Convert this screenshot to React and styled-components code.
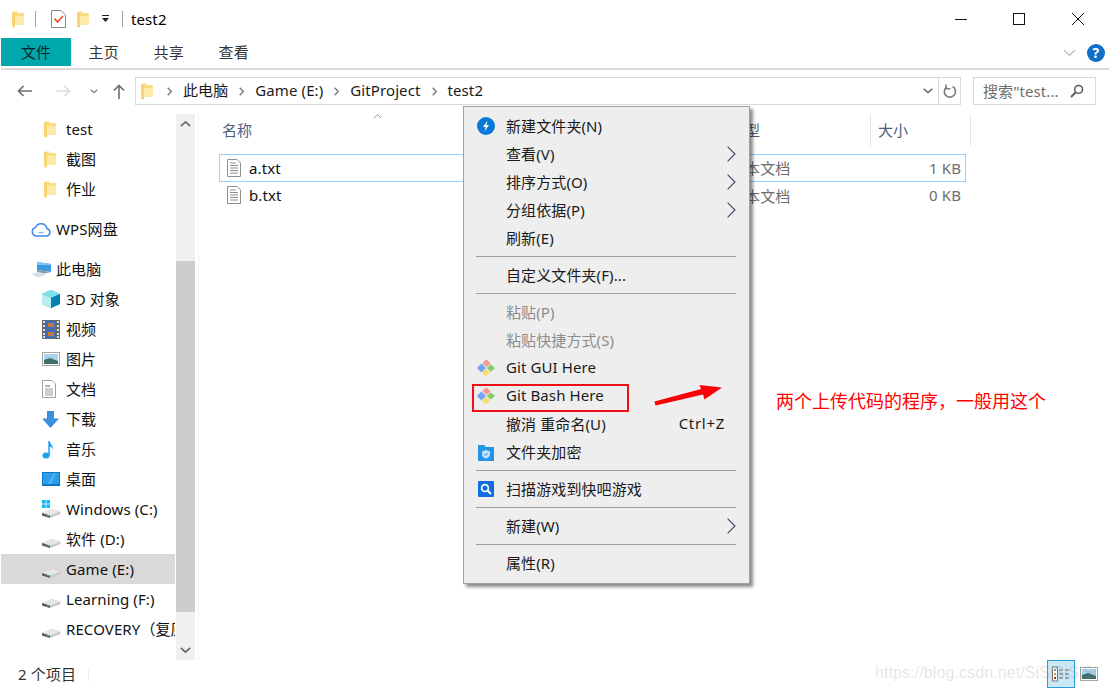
import React from "react";
import styled, { createGlobalStyle } from "styled-components";

const GlobalStyle = createGlobalStyle`
  html, body { margin: 0; padding: 0; background: #fff; }
  body { font-family: "Noto Sans", "Noto Sans CJK SC", sans-serif; font-size: 15px; color: #000; letter-spacing: 0.1px; }
`;

const Page = styled.div`
  position: relative;
  width: 1109px;
  height: 690px;
  overflow: hidden;
  background: #fff;
  display: flex;
  flex-direction: column;
`;

/* title bar */
const TitleBar = styled.div`
  height: 38px;
  display: flex;
  align-items: center;
  padding-left: 12px;
`;
const Slot = styled.span`
  display: flex;
  align-items: center;
  margin-left: ${(p) => p.$gap || 0}px;
`;
const TitleSep = styled.span`
  width: 1px;
  height: 16px;
  background: #a0a0a0;
  margin-left: ${(p) => p.$gap}px;
`;
const TitleText = styled.span`
  margin-left: 8px;
  line-height: 20px;
`;
const WinButtons = styled.div`
  margin-left: auto;
  padding-right: 2px;
  display: flex;
`;
const WinButton = styled.span`
  width: 58.5px;
  height: 38px;
  display: flex;
  align-items: center;
  justify-content: center;
`;

/* ribbon */
const Ribbon = styled.div`
  height: 30px;
  margin-left: 1px;
  border-bottom: 2px solid #dadada;
  display: flex;
  align-items: flex-start;
`;
const Tab = styled.span`
  height: 28px;
  line-height: 29px;
  padding: 0 ${(p) => (p.$active ? "20px 0 20px" : "17.4px 0 17.4px")};
  background: ${(p) => (p.$active ? "#00a8ad" : "transparent")};
  color: ${(p) => (p.$active ? "#06262a" : "#333")};
`;
const RibbonRight = styled.div`
  margin-left: auto;
  height: 28px;
  padding-right: 4px;
  display: flex;
  align-items: center;
  gap: 11px;
  transform: translateY(1px);
`;
const Help = styled.span`
  width: 18px;
  height: 18px;
  border-radius: 50%;
  background: #0e6ec8;
  color: #fff;
  font-size: 14px;
  font-weight: 700;
  line-height: 18px;
  text-align: center;
`;

/* address row */
const Toolbar = styled.div`
  height: 28px;
  margin-top: 7px;
  margin-bottom: 9px;
  padding-left: 17px;
  display: flex;
  align-items: center;
`;
const AddressBox = styled.div`
  width: 826px;
  height: 28px;
  box-sizing: border-box;
  margin-left: 10px;
  border: 1px solid #d9d9d9;
  display: flex;
  align-items: center;
  padding-left: 5px;
`;
const Crumb = styled.span`
  line-height: 20px;
  padding-bottom: 3px;
  color: #1a1a1a;
`;
const CrumbSep = styled.span`
  width: 27px;
  display: flex;
  justify-content: center;
`;
const AddressEnd = styled.div`
  margin-left: auto;
  height: 100%;
  display: flex;
  align-items: center;
`;
const RefreshCell = styled.span`
  width: 21px;
  height: 100%;
  margin-left: 5px;
  border-left: 1px solid #d9d9d9;
  display: flex;
  align-items: center;
  justify-content: center;
`;
const SearchBox = styled.div`
  width: 123px;
  height: 28px;
  box-sizing: border-box;
  margin-left: 12px;
  border: 1px solid #d9d9d9;
  padding: 0 11px 0 9px;
  display: flex;
  align-items: center;
  justify-content: space-between;
  color: #6d6d6d;
  white-space: nowrap;
`;
const SearchText = styled.span`
  padding-bottom: 1px;
`;

/* body */
const Body = styled.div`
  height: 546px;
  display: flex;
`;
const Sidebar = styled.div`
  width: 199px;
  box-sizing: border-box;
  border-right: 1px solid #f2f2f2;
  display: flex;
`;
const NavList = styled.div`
  width: 174px;
  margin-left: 1px;
  margin-right: 1px;
  overflow: hidden;
`;
const NavRow = styled.div`
  height: 30px;
  margin-top: ${(p) => (p.$spaced ? 10 : 0)}px;
  padding-left: ${(p) => (p.$root ? 30 : p.$icon === "folder" ? 43 : 41)}px;
  display: flex;
  align-items: center;
  white-space: nowrap;
  background: ${(p) => (p.$selected ? "#d9d9d9" : "transparent")};
`;
const NavIcon = styled.span`
  flex: none;
  width: ${(p) => (p.$root ? 25 : p.$folder ? 22 : 24)}px;
  display: flex;
  align-items: center;
`;
const NavLabel = styled.span`
  line-height: 20px;
  color: #111;
`;
const Scrollbar = styled.div`
  width: 19px;
  display: flex;
  flex-direction: column;
`;
const ScrollTrack = styled.div`
  height: ${(p) => p.$h}px;
  background: #f0f0f0;
  display: flex;
  justify-content: center;
  align-items: ${(p) => (p.$end ? "flex-end" : "flex-start")};
  padding: ${(p) => (p.$end ? "0 0 7px" : "7px 0 0")};
  box-sizing: border-box;
`;
const ScrollThumb = styled.div`
  height: 351px;
  background: #cdcdcd;
`;

const Main = styled.div`
  flex: 1;
  padding-left: 20px;
  position: relative;
`;
const HeaderRow = styled.div`
  display: grid;
  grid-template-columns: 511px 140px 101px;
  height: 32px;
  margin-bottom: 8px;
`;
const HeaderCell = styled.div`
  padding-left: ${(p) => p.$pad}px;
  line-height: 32px;
  color: #4c607a;
  border-left: ${(p) => (p.$rule ? "1px solid #e5e5e5" : "none")};
  border-right: ${(p) => (p.$rule ? "1px solid #e5e5e5" : "none")};
`;
const SortCaret = styled.span`
  position: absolute;
  left: 174px;
  top: 0;
  display: flex;
`;
const FileRow = styled.div`
  width: 747px;
  height: ${(p) => (p.$focus ? 28 : 27)}px;
  box-sizing: border-box;
  padding-bottom: 1px;
  display: grid;
  grid-template-columns: 510px 140px 1fr;
  align-items: center;
  border: 1px solid ${(p) => (p.$focus ? "#99d1ff" : "transparent")};
`;
const FileName = styled.div`
  display: flex;
  align-items: center;
  gap: 8px;
  padding-left: 7px;
  color: #111;
`;
const FileType = styled.div`
  color: #6d6d6d;
`;
const FileSize = styled.div`
  color: #6d6d6d;
  text-align: right;
  padding-right: 4px;
`;

/* status bar */
const StatusBar = styled.div`
  flex: 1;
  display: flex;
  align-items: flex-start;
  padding: 0 11px 0 18px;
`;
const StatusText = styled.span`
  line-height: 28px;
  color: #333;
`;
const StatusRule = styled.span`
  width: 1px;
  height: 14px;
  margin: 8px 0 0 12px;
  background: #f0f0f0;
`;
const ViewButtons = styled.div`
  margin-left: auto;
  display: flex;
  align-items: center;
  gap: 5px;
`;
const ViewButton = styled.span`
  width: ${(p) => (p.$active ? 28 : 18)}px;
  height: 28px;
  box-sizing: border-box;
  border: ${(p) => (p.$active ? "1px solid #26a0da" : "none")};
  background: ${(p) => (p.$active ? "#cbe8f6" : "transparent")};
  display: flex;
  align-items: center;
  justify-content: center;
`;

/* context menu */
const Menu = styled.div`
  position: absolute;
  left: 463px;
  top: 106px;
  width: 287px;
  height: 478px;
  box-sizing: border-box;
  padding-top: 5px;
  background: #eeeeee;
  border: 1px solid #a0a0a0;
  box-shadow: 3px 3px 3px rgba(0, 0, 0, 0.45);
`;
const MenuItem = styled.div`
  height: 28px;
  display: flex;
  align-items: center;
  padding: 0 13px 0 42px;
  position: relative;
  color: ${(p) => (p.$disabled ? "#8c8c8c" : "#1a1a1a")};
`;
const MenuLabel = styled.span`
  padding-bottom: 2px;
`;
const MenuIcon = styled.span`
  position: absolute;
  left: 12px;
  top: 5px;
  width: 20px;
  height: 18px;
  display: flex;
  align-items: center;
  justify-content: center;
`;
const MenuEnd = styled.span`
  margin-left: auto;
  display: flex;
  padding-right: ${(p) => p.$pad || 0}px;
`;
const Shortcut = styled(MenuEnd)`
  padding-bottom: 2px;
  letter-spacing: 0.7px;
`;
const MenuSep = styled.div`
  height: 1px;
  margin: 4px 13px 4px 12px;
  background: #a0a0a0;
`;

/* annotations drawn on top of the shot */
const RedBox = styled.div`
  position: absolute;
  left: 472px;
  top: 384px;
  width: 157px;
  height: 28px;
  box-sizing: border-box;
  border: 2px solid #ee1118;
`;
const RedArrow = styled.svg`
  position: absolute;
  left: 650px;
  top: 380px;
`;
const Note = styled.div`
  position: absolute;
  left: 776px;
  top: 389px;
  font-size: 18px;
  letter-spacing: 0;
  line-height: 24px;
  color: #ff0000;
  white-space: nowrap;
`;
const Watermark = styled.div`
  position: absolute;
  left: 875px;
  top: 662px;
  width: 226px;
  overflow: hidden;
  font-family: "Liberation Sans", sans-serif;
  font-size: 16px;
  line-height: 22px;
  color: rgba(120, 120, 120, 0.2);
  white-space: nowrap;
`;

/* icons */
const Folder = ({ w = 12, h = 17 }) => (
  <svg width={w} height={h} viewBox="0 0 12 17">
    <path d="M0 1 L5 0 L5 2 L12 2 L12 14 L3 14 L3 16.5 L0 15.5 Z" fill="#fbdc82" />
    <path d="M0 1 L3 1.5 L3 16.5 L0 15.5 Z" fill="#f6d471" />
    <rect x="3" y="5" width="9" height="9" fill="#fde9a8" />
  </svg>
);
const CheckDoc = () => (
  <svg width="15" height="18" viewBox="0 0 15 18">
    <path d="M.5.5H10L14.5 5V17.5H.5Z" fill="#fff" stroke="#8a8a8a" />
    <path d="M3.5 8.5L6.5 12L12 6" fill="none" stroke="#f0521e" strokeWidth="1.6" />
  </svg>
);
const TinyDrop = () => (
  <svg width="9" height="8" viewBox="0 0 9 8">
    <rect x="1" y="0" width="7" height="1" fill="#222" />
    <path d="M1 3H8L4.5 7Z" fill="#222" />
  </svg>
);
const Minimize = () => (
  <svg width="12" height="12" viewBox="0 0 12 12"><rect y="6" width="12" height="1" fill="#111" /></svg>
);
const Maximize = () => (
  <svg width="12" height="12" viewBox="0 0 12 12"><rect x=".5" y=".5" width="11" height="11" fill="none" stroke="#111" /></svg>
);
const CloseIcon = () => (
  <svg width="12" height="12" viewBox="0 0 12 12"><path d="M0 0L12 12M12 0L0 12" stroke="#111" strokeWidth="1" /></svg>
);
const Chevron = ({ dir = "down", size = 13, color = "#b4b4b4", width = 1.2 }) => {
  const paths = {
    down: "M1 1L6.5 6L12 1",
    up: "M1 6L6.5 1L12 6",
  };
  return (
    <svg width={size} height={size * 0.55} viewBox="0 0 13 7">
      <path d={paths[dir]} fill="none" stroke={color} strokeWidth={width} />
    </svg>
  );
};
const ArrowLeft = ({ color = "#6e6e6e", flip }) => (
  <svg width="15" height="12" viewBox="0 0 15 12" style={flip ? { transform: "scaleX(-1)" } : undefined}>
    <path d="M15 6H2M6.5 1L1.5 6L6.5 11" fill="none" stroke={color} strokeWidth="1.6" />
  </svg>
);
const ArrowUp = () => (
  <svg width="12" height="15" viewBox="0 0 12 15">
    <path d="M6 15V2M1 6.5L6 1.5L11 6.5" fill="none" stroke="#6e6e6e" strokeWidth="1.6" />
  </svg>
);
const CrumbArrow = () => (
  <svg width="5" height="9" viewBox="0 0 5 9">
    <path d="M.7.7L4.2 4.5L.7 8.3" fill="none" stroke="#7b7b7b" strokeWidth="1.4" />
  </svg>
);
const Refresh = () => (
  <svg width="14" height="15" viewBox="0 0 14 15">
    <path d="M9.5 2.6A5.6 5.6 0 1 1 4 2.8" fill="none" stroke="#808080" strokeWidth="1.7" />
    <path d="M3 .3V4.8H7.4" fill="none" stroke="#808080" strokeWidth="1.4" />
  </svg>
);
const SearchIcon = () => (
  <svg width="14" height="14" viewBox="0 0 14 14">
    <circle cx="8.6" cy="5.4" r="3.9" fill="none" stroke="#606060" strokeWidth="1.6" />
    <path d="M5.8 8.2L1 13" stroke="#606060" strokeWidth="2" />
  </svg>
);
const CloudIcon = () => (
  <svg width="20" height="16" viewBox="0 0 20 16">
    <path d="M5 15H15.5A3.7 3.7 0 0 0 16 7.7A6 6 0 0 0 4.6 6.4A4.4 4.4 0 0 0 5 15Z" fill="none" stroke="#3f86ee" strokeWidth="1.5" />
    <path d="M7.5 11.5H12.5" stroke="#7ab0f5" strokeWidth="1.2" />
  </svg>
);
const PcIcon = () => (
  <svg width="21" height="17" viewBox="0 0 21 17">
    <path d="M6 1L20 3V11L6 9Z" fill="#3a9ae0" />
    <path d="M6 1L20 3V4L6 4Z" fill="#7cc4f2" />
    <path d="M6 9L20 11L14 12.5L6 11Z" fill="#8a9aa8" />
    <path d="M0 13L8 11L15 14L7 16.5Z" fill="#d8dde2" />
  </svg>
);
const CubeIcon = () => (
  <svg width="18" height="18" viewBox="0 0 18 18">
    <path d="M9 0L18 4V14L9 18L0 14V4Z" fill="#15a3c7" />
    <path d="M9 0L18 4L9 8L0 4Z" fill="#7fe0e8" />
    <path d="M0 4L9 8V18L0 14Z" fill="#b8eef0" />
    <path d="M9 8L18 4V14L9 18Z" fill="#0a7fb4" />
  </svg>
);
const FilmIcon = () => (
  <svg width="18" height="19" viewBox="0 0 18 19">
    <rect width="18" height="19" fill="#666" />
    <rect x="4" y="1" width="10" height="8" fill="#3b6fc0" />
    <rect x="4" y="10" width="10" height="8" fill="#3b6fc0" />
    <rect x="6" y="3" width="6" height="4" fill="#c9773a" />
    <rect x="6" y="12" width="6" height="4" fill="#c9773a" />
    {[1, 5, 9, 13, 16].map((y) => (
      <g key={y}>
        <rect x="1" y={y} width="2" height="2" fill="#ddd" />
        <rect x="15" y={y} width="2" height="2" fill="#ddd" />
      </g>
    ))}
  </svg>
);
const PictureIcon = ({ w = 18, h = 14 }) => (
  <svg width={w} height={h} viewBox="0 0 18 14">
    <rect x=".5" y=".5" width="17" height="13" fill="#fff" stroke="#a3a3a3" />
    <rect x="2" y="2" width="14" height="10" fill="#a9d2ef" />
    <path d="M2 8L8 6L16 9V12H2Z" fill="#3f6f6a" />
  </svg>
);
const DocIcon = () => (
  <svg width="14" height="18" viewBox="0 0 14 18">
    <path d="M.5.5H10L13.5 4V17.5H.5Z" fill="#fff" stroke="#a0a0a0" />
    <path d="M3 6H8" stroke="#3f8fd8" strokeWidth="1.2" />
    <path d="M3 9H11M3 11H11M3 13H11M3 15H11" stroke="#9a9a9a" />
  </svg>
);
const DownloadIcon = () => (
  <svg width="17" height="17" viewBox="0 0 17 17">
    <path d="M5 0H12V7.5H17L8.5 17L0 7.5H5Z" fill="#3d8fdc" />
  </svg>
);
const MusicIcon = () => (
  <svg width="12" height="19" viewBox="0 0 12 19">
    <ellipse cx="4" cy="15.5" rx="3.6" ry="3" fill="#1ea0f0" />
    <path d="M6.3 1H7.8C8 4 11.5 5.5 11 10C10.5 7.5 9 7 7.8 6.5V15.5H6.3Z" fill="#1ea0f0" />
  </svg>
);
const DesktopIcon = () => (
  <svg width="18" height="14" viewBox="0 0 18 14">
    <rect width="18" height="14" fill="#0a78c8" />
    <rect x="1" y="1" width="16" height="11" fill="#2c9ee8" />
    <path d="M6 12L12 1H14L9 12Z" fill="#55b7f2" />
  </svg>
);
const DriveIcon = ({ win }) => (
  <svg width="19" height="19" viewBox="0 0 19 19">
    {win && (
      <g fill="#12b4f2">
        <rect x="0" y="0" width="3.6" height="3.6" />
        <rect x="4.4" y="0" width="3.6" height="3.6" />
        <rect x="0" y="4.4" width="3.6" height="3.6" />
        <rect x="4.4" y="4.4" width="3.6" height="3.6" />
      </g>
    )}
    <path d="M0 13L10 9L18.5 11.5V14L8 18L0 15.5Z" fill="#c9c9c9" />
    <path d="M0 13L8 15.5L18.5 11.5L10 9Z" fill="#e6e6e6" />
    <path d="M0 13L8 15.5V18L0 15.5Z" fill="#5d5d5d" />
    <rect x="5" y="15" width="2" height="1.2" fill="#35c24a" />
  </svg>
);
const TextFile = () => (
  <svg width="14" height="18" viewBox="0 0 14 18">
    <path d="M.5.5H10L13.5 4V17.5H.5Z" fill="#fff" stroke="#8e8e8e" />
    <path d="M3 4H9M3 6.5H11M3 9H11M3 11.5H11M3 14H11" stroke="#8e8e8e" />
  </svg>
);
const SubArrow = () => (
  <svg width="9" height="16" viewBox="0 0 9 16">
    <path d="M.6.6L8 8L.6 15.4" fill="none" stroke="#33475f" strokeWidth="1.1" />
  </svg>
);
const BoltBadge = () => (
  <svg width="18" height="18" viewBox="0 0 18 18">
    <circle cx="9" cy="9" r="9" fill="#0a79d6" />
    <path d="M10.5 3.5L6 10H8.7L7.5 14.5L12 8H9.3Z" fill="#fff" />
  </svg>
);
const GitIcon = () => (
  <svg width="22" height="20" viewBox="0 0 22 20">
    <path d="M6 5L1 10L6 15L11 10Z" fill="#6ea6f2" />
    <path d="M11 10.8L6.8 15L11 19.5L15.2 15Z" fill="#f9dc6c" />
    <path d="M11.8 10L16 14.2L21 10L16 5.8Z" fill="#86cc6c" />
    <path d="M7 4.5L11.5 9L16 5L11.5 0.5Z" fill="#f59a90" />
  </svg>
);
const ShieldFolder = () => (
  <svg width="16" height="17" viewBox="0 0 16 17">
    <path d="M0 1H6L8 3H16V17H0Z" fill="#2495e6" />
    <path d="M8 6L12 7.5V10.5C12 12.5 10 14 8 14.5C6 14 4 12.5 4 10.5V7.5Z" fill="#bfe2fa" />
    <path d="M6.2 10L7.7 11.5L10 9" fill="none" stroke="#2495e6" strokeWidth="1" />
  </svg>
);
const ScanBadge = () => (
  <svg width="16" height="16" viewBox="0 0 16 16">
    <rect width="16" height="16" rx="1" fill="#0f6fe0" />
    <circle cx="7" cy="7" r="3.4" fill="none" stroke="#fff" strokeWidth="1.7" />
    <path d="M9.5 9.5L13 13" stroke="#fff" strokeWidth="2" />
  </svg>
);
const DetailsView = () => (
  <svg width="18" height="16" viewBox="0 0 18 16">
    <rect x=".5" y="1" width="5" height="14" fill="#fff" stroke="#777" />
    <rect x="2" y="3" width="2" height="2" fill="#888" />
    <rect x="2" y="7" width="2" height="2" fill="#b9a23a" />
    <rect x="2" y="11" width="2" height="2" fill="#a8321f" />
    <path d="M7 4H11M13 4H17M7 8H11M13 8H17M7 12H11M13 12H17" stroke="#666" />
  </svg>
);

const NAV = [
  { label: "test", icon: "folder", el: <Folder /> },
  { label: "截图", icon: "folder", el: <Folder /> },
  { label: "作业", icon: "folder", el: <Folder /> },
  { label: "WPS网盘", root: true, spaced: true, el: <CloudIcon /> },
  { label: "此电脑", root: true, spaced: true, el: <PcIcon /> },
  { label: "3D 对象", el: <CubeIcon /> },
  { label: "视频", el: <FilmIcon /> },
  { label: "图片", el: <PictureIcon /> },
  { label: "文档", el: <DocIcon /> },
  { label: "下载", el: <DownloadIcon /> },
  { label: "音乐", el: <MusicIcon /> },
  { label: "桌面", el: <DesktopIcon /> },
  { label: "Windows (C:)", el: <DriveIcon win /> },
  { label: "软件 (D:)", el: <DriveIcon /> },
  { label: "Game (E:)", selected: true, el: <DriveIcon /> },
  { label: "Learning (F:)", el: <DriveIcon /> },
  { label: "RECOVERY（复原）", el: <DriveIcon /> },
];

const FILES = [
  { name: "a.txt", size: "1 KB", focus: true },
  { name: "b.txt", size: "0 KB" },
];

const CRUMBS = ["此电脑", "Game (E:)", "GitProject", "test2"];

const MENU = [
  { label: "新建文件夹(N)", icon: <BoltBadge /> },
  { label: "查看(V)", sub: true },
  { label: "排序方式(O)", sub: true },
  { label: "分组依据(P)", sub: true },
  { label: "刷新(E)" },
  { sep: true },
  { label: "自定义文件夹(F)..." },
  { sep: true },
  { label: "粘贴(P)", disabled: true },
  { label: "粘贴快捷方式(S)", disabled: true },
  { label: "Git GUI Here", icon: <GitIcon /> },
  { label: "Git Bash Here", icon: <GitIcon /> },
  { label: "撤消 重命名(U)", shortcut: "Ctrl+Z" },
  { label: "文件夹加密", icon: <ShieldFolder /> },
  { sep: true },
  { label: "扫描游戏到快吧游戏", icon: <ScanBadge /> },
  { sep: true },
  { label: "新建(W)", sub: true },
  { sep: true },
  { label: "属性(R)" },
];

export default function App() {
  return (
    <Page>
      <GlobalStyle />
      <TitleBar>
        <Slot><Folder /></Slot>
        <TitleSep $gap={11} />
        <Slot $gap={15}><CheckDoc /></Slot>
        <Slot $gap={11}><Folder /></Slot>
        <Slot $gap={12}><TinyDrop /></Slot>
        <TitleSep $gap={12} />
        <TitleText>test2</TitleText>
        <WinButtons>
          <WinButton><Minimize /></WinButton>
          <WinButton><Maximize /></WinButton>
          <WinButton><CloseIcon /></WinButton>
        </WinButtons>
      </TitleBar>

      <Ribbon>
        <Tab $active>文件</Tab>
        <Tab>主页</Tab>
        <Tab>共享</Tab>
        <Tab>查看</Tab>
        <RibbonRight>
          <Chevron />
          <Help>?</Help>
        </RibbonRight>
      </Ribbon>

      <Toolbar>
        <Slot><ArrowLeft /></Slot>
        <Slot $gap={24}><ArrowLeft flip color="#dcdcdc" /></Slot>
        <Slot $gap={19}><Chevron size={8} color="#777" width={2} /></Slot>
        <Slot $gap={15}><ArrowUp /></Slot>
        <AddressBox>
          <Folder />
          <Slot $gap={3} />
          {CRUMBS.map((c) => (
            <React.Fragment key={c}>
              <CrumbSep><CrumbArrow /></CrumbSep>
              <Crumb>{c}</Crumb>
            </React.Fragment>
          ))}
          <AddressEnd>
            <Chevron size={10} color="#555" width={1.8} />
            <RefreshCell><Refresh /></RefreshCell>
          </AddressEnd>
        </AddressBox>
        <SearchBox>
          <SearchText>搜索"test...</SearchText>
          <SearchIcon />
        </SearchBox>
      </Toolbar>

      <Body>
        <Sidebar>
          <NavList>
            {NAV.map((n) => (
              <NavRow key={n.label} $root={n.root} $icon={n.icon} $spaced={n.spaced} $selected={n.selected}>
                <NavIcon $root={n.root} $folder={n.icon === "folder"}>{n.el}</NavIcon>
                <NavLabel>{n.label}</NavLabel>
              </NavRow>
            ))}
          </NavList>
          <Scrollbar>
            <ScrollTrack $h={147}><Chevron size={11} color="#666" width={2} dir="up" /></ScrollTrack>
            <ScrollThumb />
            <ScrollTrack $h={48} $end><Chevron size={11} color="#666" width={2} /></ScrollTrack>
          </Scrollbar>
        </Sidebar>

        <Main>
          <SortCaret><Chevron size={9} color="#888" width={1.2} dir="up" /></SortCaret>
          <HeaderRow>
            <HeaderCell $pad={3}>名称</HeaderCell>
            <HeaderCell $pad={0}>类型</HeaderCell>
            <HeaderCell $pad={7} $rule>大小</HeaderCell>
          </HeaderRow>
          {FILES.map((f) => (
            <FileRow key={f.name} $focus={f.focus}>
              <FileName><TextFile />{f.name}</FileName>
              <FileType>文本文档</FileType>
              <FileSize>{f.size}</FileSize>
            </FileRow>
          ))}
        </Main>
      </Body>

      <StatusBar>
        <StatusText>2 个项目</StatusText>
        <StatusRule />
        <ViewButtons>
          <ViewButton $active><DetailsView /></ViewButton>
          <ViewButton><PictureIcon /></ViewButton>
        </ViewButtons>
      </StatusBar>

      <Menu>
        {MENU.map((m, i) =>
          m.sep ? (
            <MenuSep key={i} />
          ) : (
            <MenuItem key={m.label} $disabled={m.disabled}>
              {m.icon && <MenuIcon>{m.icon}</MenuIcon>}
              <MenuLabel>{m.label}</MenuLabel>
              {m.sub && <MenuEnd><SubArrow /></MenuEnd>}
              {m.shortcut && <Shortcut $pad={11}>{m.shortcut}</Shortcut>}
            </MenuItem>
          )
        )}
      </Menu>

      <RedBox />
      <RedArrow width="76" height="28" viewBox="0 0 76 28">
        <path d="M4.5 21.5L51 9L49.5 5L72 7.5L54.5 19.5L53 14.5L5.5 25.5Z" fill="#fb0007" />
      </RedArrow>
      <Note>两个上传代码的程序，一般用这个</Note>
      <Watermark>https://blog.csdn.net/SiSiSiSiSi</Watermark>
    </Page>
  );
}
